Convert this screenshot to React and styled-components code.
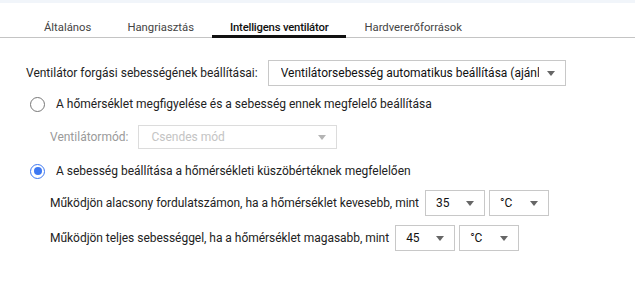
import React from "react";
import styled, { createGlobalStyle } from "styled-components";

const GlobalStyle = createGlobalStyle`
  body {
    margin: 0;
    background: #fff;
    font-family: Roboto, "Liberation Sans", sans-serif;
    font-size: 12px;
    color: #222;
  }
`;

const Page = styled.div`
  width: 635px;
  height: 289px;
  border-top: 3px solid #f1f5fa;
  box-sizing: border-box;
`;

const TabBar = styled.div`
  display: flex;
  height: 34px;
  padding-left: 26px;
  border-bottom: 1px solid #c4c4c4;
`;

const Tab = styled.div`
  padding: 18px 18px 0;
  line-height: 14px;
  font-size: 11.3px;
  margin-bottom: -1px;
  border-bottom: 3px solid ${(p) => (p.$active ? "#111" : "transparent")};
  color: ${(p) => (p.$active ? "#111" : "#444")};
  font-weight: ${(p) => (p.$active ? 500 : 400)};
  letter-spacing: ${(p) => (p.$active ? "-0.2px" : "0")};
  white-space: nowrap;
`;

const Form = styled.div`
  display: flex;
  flex-direction: column;
  padding: 0 26px;
`;

const Row = styled.div`
  display: flex;
  align-items: center;
  min-height: 20px;
  margin-top: ${(p) => p.$mt}px;
  padding-left: ${(p) => p.$indent || 0}px;
`;

const Label = styled.span`
  margin-right: ${(p) => (p.$tight ? 6 : 10)}px;
  color: ${(p) => (p.$disabled ? "#9a9a9a" : "#222")};
  letter-spacing: ${(p) => (p.$tight ? "-0.03px" : "0")};
  white-space: nowrap;
`;

const Select = styled.div`
  display: flex;
  align-items: center;
  justify-content: space-between;
  box-sizing: border-box;
  width: ${(p) => p.$w}px;
  height: ${(p) => p.$h || 26}px;
  padding: 0 10px 0 ${(p) => p.$pl || 12}px;
  margin-right: 4px;
  border: 1px solid ${(p) => (p.$disabled ? "#dcdcdc" : "#c8c8c8")};
  color: ${(p) => (p.$disabled ? "#c4c4c4" : "#111")};
  background: #fff;
  overflow: hidden;
`;

const SelectText = styled.span`
  white-space: nowrap;
  overflow: hidden;
  flex: 1;
`;

const Caret = styled.span`
  flex: none;
  width: 0;
  height: 0;
  margin-left: 8px;
  border-left: 4px solid transparent;
  border-right: 4px solid transparent;
  border-top: 5px solid ${(p) => (p.$disabled ? "#b4b4b4" : "#666")};
`;

const Radio = styled.span`
  flex: none;
  box-sizing: border-box;
  width: 15px;
  height: 15px;
  margin: 0 11px 0 4px;
  border-radius: 50%;
  border: ${(p) => (p.$checked ? "1.5px solid #3d78f2" : "1px solid #777")};
  display: flex;
  align-items: center;
  justify-content: center;
  &::after {
    content: "";
    display: ${(p) => (p.$checked ? "block" : "none")};
    width: 8px;
    height: 8px;
    border-radius: 50%;
    background: #3d78f2;
  }
`;

const Dropdown = ({ value, w, h, pl, disabled }) => (
  <Select $w={w} $h={h} $pl={pl} $disabled={disabled}>
    <SelectText>{value}</SelectText>
    <Caret $disabled={disabled} />
  </Select>
);

export default function App() {
  return (
    <Page>
      <GlobalStyle />
      <TabBar>
        <Tab>Általános</Tab>
        <Tab>Hangriasztás</Tab>
        <Tab $active>Intelligens ventilátor</Tab>
        <Tab>Hardvererőforrások</Tab>
      </TabBar>
      <Form>
        <Row $mt={22}>
          <Label>Ventilátor forgási sebességének beállításai:</Label>
          <Dropdown
            w={298}
            value="Ventilátorsebesség automatikus beállítása (ajánlott)"
          />
        </Row>
        <Row $mt={8}>
          <Radio />
          <Label>A hőmérséklet megfigyelése és a sebesség ennek megfelelő beállítása</Label>
        </Row>
        <Row $mt={11} $indent={24}>
          <Label $disabled>Ventilátormód:</Label>
          <Dropdown w={199} h={24} value="Csendes mód" disabled />
        </Row>
        <Row $mt={12}>
          <Radio $checked />
          <Label>A sebesség beállítása a hőmérsékleti küszöbértéknek megfelelően</Label>
        </Row>
        <Row $mt={9} $indent={24}>
          <Label $tight>Működjön alacsony fordulatszámon, ha a hőmérséklet kevesebb, mint</Label>
          <Dropdown w={60} pl={10} value="35" />
          <Dropdown w={60} pl={10} value="°C" />
        </Row>
        <Row $mt={9} $indent={24}>
          <Label $tight>Működjön teljes sebességgel, ha a hőmérséklet magasabb, mint</Label>
          <Dropdown w={60} pl={10} value="45" />
          <Dropdown w={60} pl={10} value="°C" />
        </Row>
      </Form>
    </Page>
  );
}
